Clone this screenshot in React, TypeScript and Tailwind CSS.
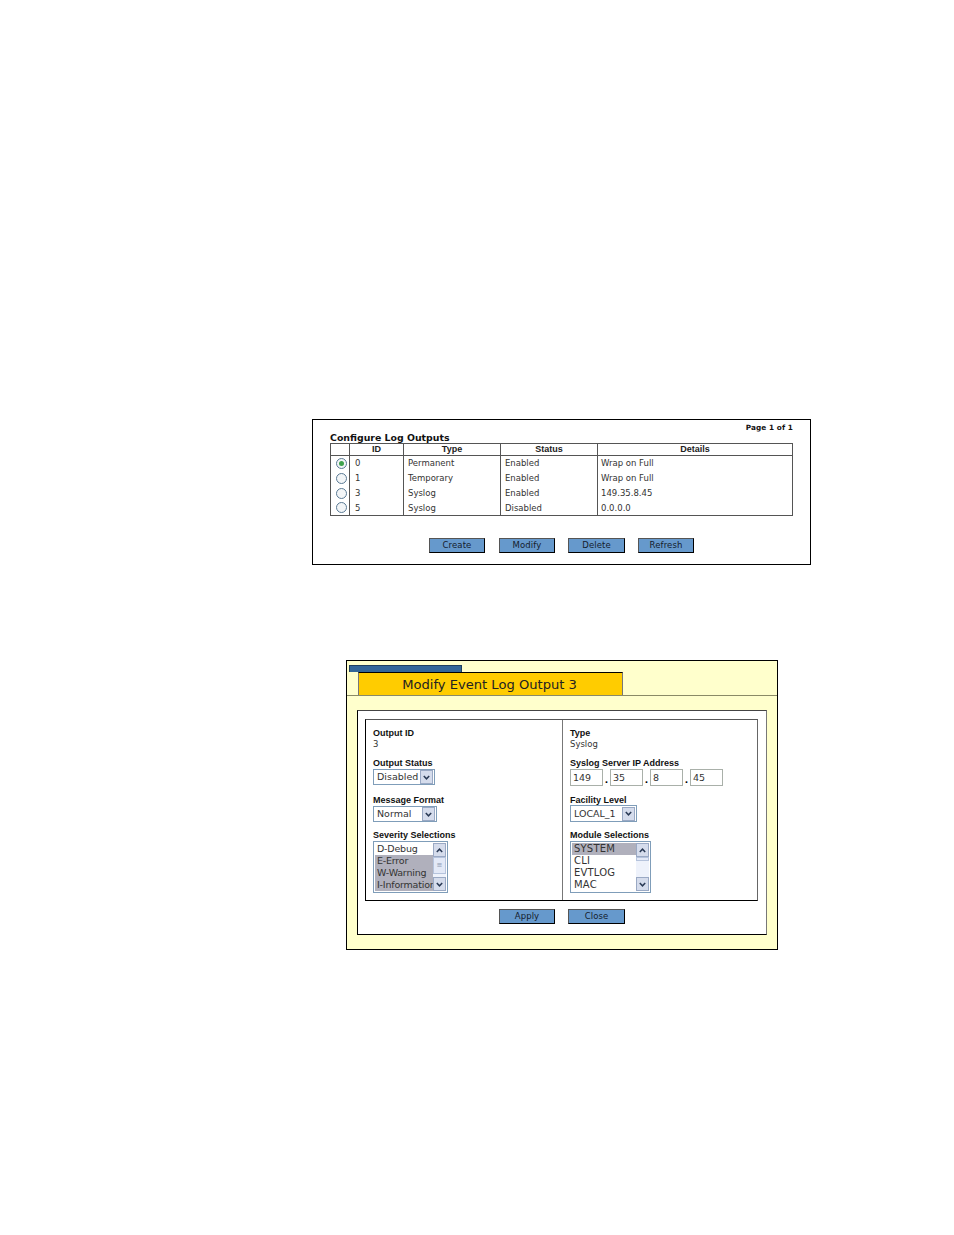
const font = "[font-family:'DejaVu_Sans',Verdana,sans-serif]";
const arial = "[font-family:'Liberation_Sans',Arial,sans-serif]";

const rows = [
  { id: '0', type: 'Permanent', status: 'Enabled', details: 'Wrap on Full', on: true },
  { id: '1', type: 'Temporary', status: 'Enabled', details: 'Wrap on Full', on: false },
  { id: '3', type: 'Syslog', status: 'Enabled', details: '149.35.8.45', on: false },
  { id: '5', type: 'Syslog', status: 'Disabled', details: '0.0.0.0', on: false },
];

function Radio({ on }: { on: boolean }) {
  return (
    <span className="ml-[3px] flex size-[11px] items-center justify-center rounded-full border border-[#5a7a94] bg-[#f2f5f7]">
      {on && <span className="size-[5px] rounded-full bg-[#3fa34d]" />}
    </span>
  );
}

function Btn({ label, w = 'w-[56px]' }: { label: string; w?: string }) {
  return (
    <div
      className={`flex h-[15px] ${w} items-center justify-center border border-t-[#555] border-l-[#555] border-r-black border-b-black bg-[#6699cc] text-[8.5px] leading-none tracking-[0.1px] text-[#14202c]`}
    >
      {label}
    </div>
  );
}

function Chevron({ up = false }: { up?: boolean }) {
  return (
    <svg width="7" height="5" viewBox="0 0 7 5" className={up ? 'rotate-180' : ''}>
      <path d="M0.8 1 L3.5 3.8 L6.2 1" fill="none" stroke="#2a3a55" strokeWidth="1.5" />
    </svg>
  );
}

function ArrowBox({ up = false }: { up?: boolean }) {
  return (
    <div className="flex h-[14px] w-[13px] items-center justify-center border border-[#9aa9c4] bg-[#d5dcec]">
      <Chevron up={up} />
    </div>
  );
}

function Select({ value, w, className = '' }: { value: string; w: string; className?: string }) {
  return (
    <div className={`flex h-[16px] ${w} items-center justify-between border border-[#7f9db9] bg-white pr-px pl-[3px] ${className}`}>
      <span className="text-[9.5px] leading-none text-[#333]">{value}</span>
      <ArrowBox />
    </div>
  );
}

function ListBox({
  items,
  selected,
  w,
  thumbTall,
  textClass,
}: {
  items: string[];
  selected: number[];
  w: string;
  thumbTall: boolean;
  textClass: string;
}) {
  return (
    <div className={`flex h-[52px] ${w} border border-[#7f9db9] bg-white p-px`}>
      <div className="min-w-0 flex-1">
        {items.map((item, i) => (
          <div
            key={item}
            className={`h-[12px] pl-[2px] leading-[12px] whitespace-nowrap text-[#333] ${textClass} ${
              selected.includes(i) ? 'bg-[#b0b0bc]' : ''
            }`}
          >
            {item}
          </div>
        ))}
      </div>
      <div className="flex w-[13px] flex-col bg-[#eef2fb]">
        <ArrowBox up />
        {thumbTall ? (
          <div className="flex h-[17px] items-center justify-center border border-[#b5c3dc] bg-[#e3e9f7] text-[7px] leading-none text-[#8a97b0]">
            ≡
          </div>
        ) : (
          <div className="h-[4px] border border-[#b5c3dc] bg-[#e3e9f7]" />
        )}
        <div className="flex-1" />
        <ArrowBox />
      </div>
    </div>
  );
}

function Label({ children, className = '' }: { children: string; className?: string }) {
  return <div className={`h-[11px] ${arial} text-[9px] leading-[11px] font-bold whitespace-nowrap text-[#111] ${className}`}>{children}</div>;
}

function IpBox({ value }: { value: string }) {
  return (
    <div className="flex h-[17px] w-[33px] items-center border border-[#a9b0a9] bg-white pl-[2px] text-[9.5px] leading-none text-[#333]">
      {value}
    </div>
  );
}

function Dot() {
  return <div className="w-[7px] self-end pb-px text-center text-[9px] leading-none font-bold">.</div>;
}

export default function App() {
  return (
    <div className={`relative h-[1235px] w-[954px] overflow-hidden bg-white pt-[419px] ${font}`}>
      {/* Configure Log Outputs */}
      <div className="ml-[312px] h-[146px] w-[499px] border border-black pt-[3px] pr-[17px] pl-[17px]">
        <div className="h-[9px] text-right text-[7.3px] leading-[9px] font-bold tracking-[0.1px] text-[#111]">Page 1 of 1</div>
        <div className="mt-[1px] h-[9px] text-[9.4px] leading-[9px] font-bold text-[#111]">Configure Log Outputs</div>
        <table className="mt-[1px] h-[73px] w-[463px] table-fixed border-collapse border-y border-[#555] text-[8.5px] text-[#333]">
          <colgroup>
            <col className="w-[19px]" />
            <col className="w-[54px]" />
            <col className="w-[97px]" />
            <col className="w-[97px]" />
            <col />
          </colgroup>
          <thead>
            <tr className={`h-[12px] border-b border-[#555] ${arial} text-[9px] leading-none text-[#222]`}>
              <th className="border-x border-[#555]" />
              <th className="border-r border-[#555] font-bold">ID</th>
              <th className="border-r border-[#555] font-bold">Type</th>
              <th className="border-r border-[#555] font-bold">Status</th>
              <th className="border-r border-[#555] font-bold">Details</th>
            </tr>
          </thead>
          <tbody>
            {rows.map((r) => (
              <tr key={r.id} className="h-[15px] leading-none">
                <td className="border-x border-[#555]">
                  <div className="flex justify-center">
                    <Radio on={r.on} />
                  </div>
                </td>
                <td className="border-r border-[#555] pl-[5px]">{r.id}</td>
                <td className="border-r border-[#555] pl-[4px]">{r.type}</td>
                <td className="border-r border-[#555] pl-[4px]">{r.status}</td>
                <td className="border-r border-[#555] pl-[3px]">{r.details}</td>
              </tr>
            ))}
          </tbody>
        </table>
        <div className="mt-[22px] ml-[99px] flex">
          <Btn label="Create" />
          <div className="w-[14px]" />
          <Btn label="Modify" />
          <div className="w-[13px]" />
          <Btn label="Delete" w="w-[57px]" />
          <div className="w-[13px]" />
          <Btn label="Refresh" />
        </div>
      </div>

      {/* Modify Event Log Output */}
      <div className="mt-[95px] ml-[346px] h-[290px] w-[432px] border border-black bg-[#ffffcc] pt-[4px]">
        <div className="ml-[2px] h-[7px] w-[113px] border border-b-0 border-[#1f3f5f] bg-[#336699]" />
        <div className="border-b border-[#8a8a66]">
          <div className="ml-[11px] flex h-[23px] w-[265px] items-center justify-center border border-b-0 border-t-black border-r-[#777] border-l-[#777] bg-[#ffcc00] pt-[1px] pr-[2px] text-[13.1px] leading-none text-[#222]">
            Modify Event Log Output 3
          </div>
        </div>
        <div className="mt-[14px] ml-[10px] h-[225px] w-[410px] border border-t-[#444] border-r-[#777] border-b-black border-l-black bg-white pt-[8px] pl-[7px]">
          <div className="flex h-[182px] w-[393px] border border-t-[#555] border-r-[#666] border-b-black border-l-black">
            <div className="w-[197px] border-r border-[#777] pt-[8px] pl-[7px]">
              <Label>Output ID</Label>
              <div className="h-[11px] text-[8.5px] leading-[11px] text-[#333]">3</div>
              <Label className="mt-[8px]">Output Status</Label>
              <Select value="Disabled" w="w-[62px]" />
              <Label className="mt-[10px]">Message Format</Label>
              <Select value="Normal" w="w-[64px]" />
              <Label className="mt-[8px]">Severity Selections</Label>
              <ListBox
                items={['D-Debug', 'E-Error', 'W-Warning', 'I-Information']}
                selected={[1, 2, 3]}
                w="w-[75px]"
                thumbTall
                textClass="text-[9.5px] tracking-[-0.2px]"
              />
            </div>
            <div className="flex-1 pt-[8px] pl-[7px]">
              <Label>Type</Label>
              <div className="h-[11px] text-[8.5px] leading-[11px] text-[#333]">Syslog</div>
              <Label className="mt-[8px]">Syslog Server IP Address</Label>
              <div className="flex">
                <IpBox value="149" />
                <Dot />
                <IpBox value="35" />
                <Dot />
                <IpBox value="8" />
                <Dot />
                <IpBox value="45" />
              </div>
              <Label className="mt-[9px]">Facility Level</Label>
              <Select value="LOCAL_1" w="w-[67px]" className="-mt-px h-[17px]" />
              <Label className="mt-[8px]">Module Selections</Label>
              <ListBox
                items={['SYSTEM', 'CLI', 'EVTLOG', 'MAC']}
                selected={[0]}
                w="w-[81px]"
                thumbTall={false}
                textClass="text-[10px] tracking-[0.2px]"
              />
            </div>
          </div>
          <div className="mt-[8px] ml-[134px] flex">
            <Btn label="Apply" />
            <div className="w-[13px]" />
            <Btn label="Close" w="w-[57px]" />
          </div>
        </div>
      </div>
    </div>
  );
}
